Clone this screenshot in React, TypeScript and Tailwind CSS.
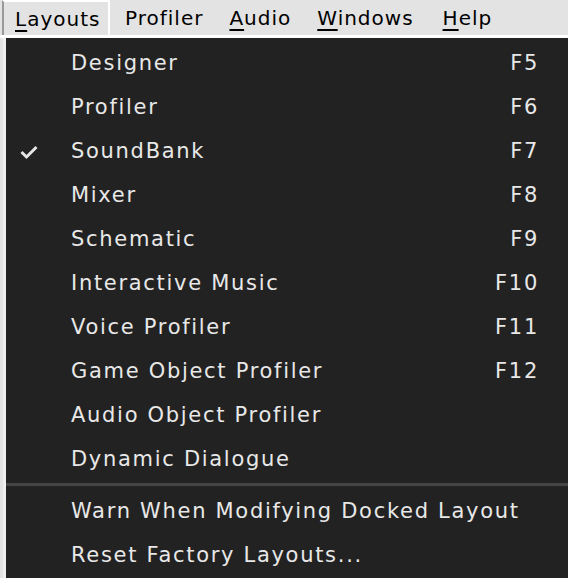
import React from 'react';

const items: { label: string; key?: string; checked?: boolean }[] = [
  { label: 'Designer', key: 'F5' },
  { label: 'Profiler', key: 'F6' },
  { label: 'SoundBank', key: 'F7', checked: true },
  { label: 'Mixer', key: 'F8' },
  { label: 'Schematic', key: 'F9' },
  { label: 'Interactive Music', key: 'F10' },
  { label: 'Voice Profiler', key: 'F11' },
  { label: 'Game Object Profiler', key: 'F12' },
  { label: 'Audio Object Profiler' },
  { label: 'Dynamic Dialogue' },
];

const Check = () => (
  <svg width="18" height="16" viewBox="0 0 18 16" className="block">
    <path d="M1.5 8 L6.5 13 L16.5 3" fill="none" stroke="#e6e6e6" strokeWidth="3" />
  </svg>
);

const MenuRow: React.FC<{ label: string; shortcut?: string; checked?: boolean }> = ({ label, shortcut, checked }) => (
  <div className="flex items-center h-[44px] whitespace-nowrap">
    <div className="w-[65px] shrink-0 pl-[14px]">{checked && <Check />}</div>
    <div className="flex-1">{label}</div>
    {shortcut && <div className="w-[80px] shrink-0 pr-[29px] text-right">{shortcut}</div>}
  </div>
);

export default function App() {
  return (
    <div
      className="w-[568px] h-[578px] bg-[#e3e3e3] overflow-hidden text-[21px] tracking-[1.7px]"
      style={{ fontFamily: '"DejaVu Sans", sans-serif' }}
    >
      <div className="flex h-[35px] items-center text-black text-[20px] tracking-[1px] whitespace-nowrap">
        <div className="h-[35px] ml-[2px] w-[108px] shrink-0 pl-[11px] flex items-center border-2 border-white border-b-0 border-l-[#999] bg-[#e3e3e3]">
          <span><span className="underline underline-offset-[4px]">L</span>ayouts</span>
        </div>
        <div className="pl-[15px]">Profiler</div>
        <div className="pl-[26px]"><span className="underline underline-offset-[4px]">A</span>udio</div>
        <div className="pl-[26px]"><span className="underline underline-offset-[4px]">W</span>indows</div>
        <div className="pl-[29px]"><span className="underline underline-offset-[4px]">H</span>elp</div>
      </div>
      <div className="h-[3px] bg-white" />
      <div className="bg-[#222222] h-full ml-[3px] border-l-[3px] border-[#f0f0f0] text-[#e8e8e8] pt-[4px]">
        {items.map((it) => (
          <MenuRow key={it.label} label={it.label} shortcut={it.key} checked={it.checked} />
        ))}
        <div className="h-[3px] bg-[#454545] mt-[1px] mb-[4px]" />
        <MenuRow label="Warn When Modifying Docked Layout" />
        <MenuRow label="Reset Factory Layouts..." />
      </div>
    </div>
  );
}
